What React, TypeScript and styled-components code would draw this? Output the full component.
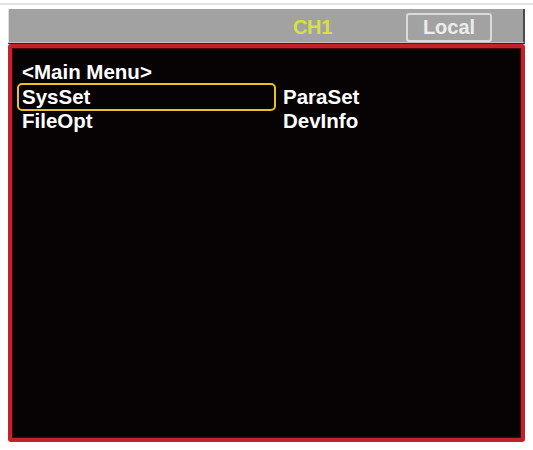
import React from 'react';
import styled, { createGlobalStyle } from 'styled-components';

const GlobalStyle = createGlobalStyle`
  html, body {
    margin: 0;
    padding: 0;
    background: #ffffff;
  }
  body {
    font-family: "Liberation Sans", Arial, sans-serif;
  }
`;

const Page = styled.div`
  width: 533px;
  height: 450px;
  overflow: hidden;
  padding-top: 3px;
  box-sizing: border-box;
`;

const TopRule = styled.div`
  height: 2px;
  background: #e2e2e2;
  margin-bottom: 4px;
`;

const Device = styled.div`
  margin: 0 8px;
  width: 517px;
  display: flex;
  flex-direction: column;
`;

const Header = styled.div`
  height: 34px;
  box-sizing: border-box;
  background: #a2a2a2;
  border-left: 1px solid #dedede;
  border-right: 2px solid #4a4a4a;
  border-bottom: 1px solid #c4c4c4;
  box-shadow: 0 1px 0 #2a2a2a;
  display: flex;
  align-items: center;
  justify-content: flex-end;
  padding: 3px 31px 0 0;
`;

const Channel = styled.span`
  font-weight: bold;
  font-size: 20px;
  color: #d6e043;
  margin-right: 74px;
  letter-spacing: -0.3px;
`;

const ModeBadge = styled.div`
  width: 86px;
  height: 29px;
  box-sizing: border-box;
  border: 2px solid #dadada;
  border-radius: 3px;
  display: flex;
  align-items: center;
  justify-content: center;
  font-weight: bold;
  font-size: 20px;
  color: #ececec;
`;

const Screen = styled.div`
  margin-top: 1px;
  height: 398px;
  box-sizing: border-box;
  background: #070305;
  border: 4px solid #c2232b;
  border-radius: 3px;
  box-shadow: inset 0 0 0 1px #4a0a0d;
  padding: 12px 0 0 7px;
  color: #ffffff;
  font-weight: bold;
  font-size: 20.5px;
  line-height: 24.5px;
`;

const Title = styled.div`
  padding-left: 3px;
  height: 24.5px;
`;

const MenuGrid = styled.div`
  display: grid;
  grid-template-columns: 255px 255px;
  column-gap: 6px;
  grid-auto-rows: 24.5px;
`;

const MenuItem = styled.div<{ $selected?: boolean }>`
  padding-left: 3px;
  border-radius: 3px;
  outline: ${(p) => (p.$selected ? '2.5px solid #e8c21e' : 'none')};
  outline-offset: -0.5px;
`;

const items = [
  { label: 'SysSet', selected: true },
  { label: 'ParaSet' },
  { label: 'FileOpt' },
  { label: 'DevInfo' },
];

export default function App() {
  return (
    <>
      <GlobalStyle />
      <Page>
        <TopRule />
        <Device>
          <Header>
            <Channel>CH1</Channel>
            <ModeBadge>Local</ModeBadge>
          </Header>
          <Screen>
            <Title>&lt;Main Menu&gt;</Title>
            <MenuGrid>
              {items.map((item) => (
                <MenuItem key={item.label} $selected={item.selected}>
                  {item.label}
                </MenuItem>
              ))}
            </MenuGrid>
          </Screen>
        </Device>
      </Page>
    </>
  );
}
